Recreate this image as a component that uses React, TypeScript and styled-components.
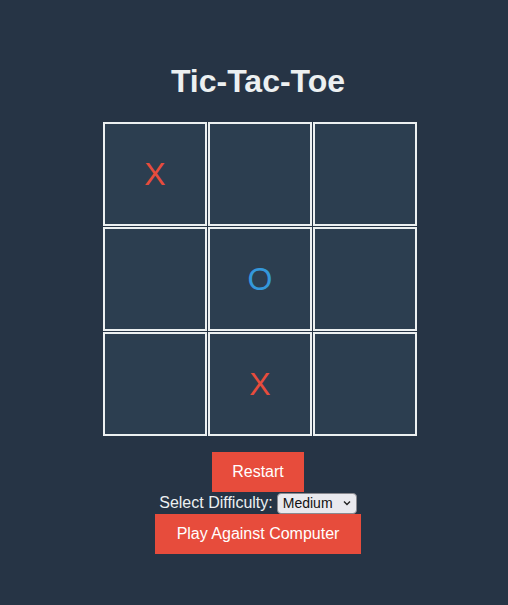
import React, { useState } from 'react'
import styled, { createGlobalStyle } from 'styled-components'

const GlobalStyle = createGlobalStyle`
  html, body {
    margin: 0;
    padding: 0;
    background: #263445;
  }
  body {
    font-family: "Liberation Sans", Arial, sans-serif;
    color: #ecf0f1;
  }
`

const Page = styled.div`
  min-height: 605px;
  display: flex;
  flex-direction: column;
  align-items: center;
  padding: 42px 0 0 8px;
  box-sizing: border-box;
`

const Title = styled.h1`
  font-size: 32px;
  font-weight: bold;
  margin: 21px 0 22px;
  line-height: 37px;
  color: #ecf0f1;
`

const Board = styled.div`
  display: grid;
  grid-template-columns: repeat(3, 104px);
  grid-template-rows: repeat(3, 104px);
  gap: 1px;
  margin-left: 4px;
`

const Cell = styled.div<{ $mark: string }>`
  box-sizing: border-box;
  border: 2px solid #ecf0f1;
  background: #2c3e50;
  display: flex;
  align-items: center;
  justify-content: center;
  font-size: 32px;
  color: ${p => (p.$mark === 'X' ? '#e74c3c' : '#3498db')};
  cursor: pointer;
`

const Button = styled.button`
  background: #e74c3c;
  color: #ffffff;
  border: none;
  font-family: "Liberation Sans", Arial, sans-serif;
  font-size: 16px;
  height: 40px;
  padding: 0 20px;
  cursor: pointer;
`

const RestartButton = styled(Button)`
  margin-top: 16px;
  width: 92px;
  padding: 0;
`

const DifficultyRow = styled.div`
  display: flex;
  align-items: center;
  gap: 4px;
  font-size: 16px;
  height: 22px;
  color: #ecf0f1;
`

const SelectWrap = styled.div`
  position: relative;
  display: inline-flex;
`

const Select = styled.select`
  appearance: none;
  -webkit-appearance: none;
  background: #e9e9ee;
  border: 1px solid #8a8a90;
  border-radius: 4px;
  font-family: "Liberation Sans", Arial, sans-serif;
  font-size: 14px;
  color: #111;
  height: 21px;
  width: 80px;
  padding: 0 18px 0 5px;
`

const Chevron = styled.svg`
  position: absolute;
  right: 6px;
  top: 7px;
  pointer-events: none;
`

const PlayButton = styled(Button)`
  width: 206px;
  padding: 0;
`

const initial = ['X', '', '', '', 'O', '', '', 'X', '']

export default function App() {
  const [cells, setCells] = useState<string[]>(initial)
  const [difficulty, setDifficulty] = useState('medium')

  return (
    <Page>
      <GlobalStyle />
      <Title>Tic-Tac-Toe</Title>
      <Board>
        {cells.map((c, i) => (
          <Cell key={i} $mark={c}>{c}</Cell>
        ))}
      </Board>
      <RestartButton onClick={() => setCells(Array(9).fill(''))}>Restart</RestartButton>
      <DifficultyRow>
        <span>Select Difficulty:</span>
        <SelectWrap>
          <Select value={difficulty} onChange={e => setDifficulty(e.target.value)}>
            <option value="easy">Easy</option>
            <option value="medium">Medium</option>
            <option value="hard">Hard</option>
          </Select>
          <Chevron width="8" height="6" viewBox="0 0 8 6">
            <path d="M1 1.5 L4 4.5 L7 1.5" fill="none" stroke="#222" strokeWidth="1.4" />
          </Chevron>
        </SelectWrap>
      </DifficultyRow>
      <PlayButton>Play Against Computer</PlayButton>
    </Page>
  )
}
